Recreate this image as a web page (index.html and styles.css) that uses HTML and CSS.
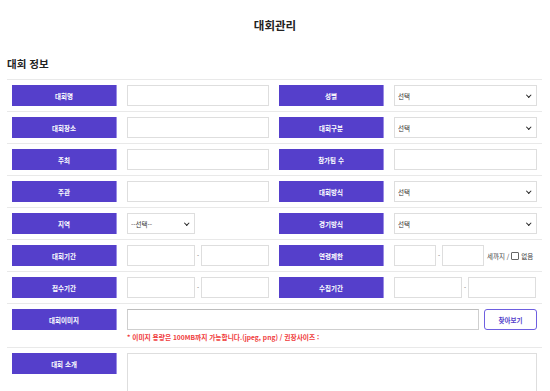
FILE: index.html
```html
<!DOCTYPE html>
<html lang="ko">
<head>
    <meta charset="UTF-8">
    <meta name="viewport" content="width=device-width, initial-scale=1.0">
    <title>대회관리</title>
    <link rel="stylesheet" href="styles.css">
</head>
<body>
    <h1 class="page-title">대회관리</h1>
    <div class="section">
        <h2 class="section-title">대회 정보</h2>
        <div class="form">
            <div class="row">
                <div class="label">대회명</div>
                <div class="cell"><input type="text" class="input full"></div>
                <div class="label">성별</div>
                <div class="cell">
                    <span class="select-wrap full"><select class="select"><option>선택</option></select></span>
                </div>
            </div>
            <div class="row">
                <div class="label">대회장소</div>
                <div class="cell"><input type="text" class="input full"></div>
                <div class="label">대회구분</div>
                <div class="cell">
                    <span class="select-wrap full"><select class="select"><option>선택</option></select></span>
                </div>
            </div>
            <div class="row">
                <div class="label">주최</div>
                <div class="cell"><input type="text" class="input full"></div>
                <div class="label">참가팀 수</div>
                <div class="cell"><input type="text" class="input full"></div>
            </div>
            <div class="row">
                <div class="label">주관</div>
                <div class="cell"><input type="text" class="input full"></div>
                <div class="label">대회방식</div>
                <div class="cell">
                    <span class="select-wrap full"><select class="select"><option>선택</option></select></span>
                </div>
            </div>
            <div class="row">
                <div class="label">지역</div>
                <div class="cell">
                    <span class="select-wrap half"><select class="select"><option>--선택--</option></select></span>
                </div>
                <div class="label">경기방식</div>
                <div class="cell">
                    <span class="select-wrap full"><select class="select"><option>선택</option></select></span>
                </div>
            </div>
            <div class="row">
                <div class="label">대회기간</div>
                <div class="cell">
                    <input type="text" class="input half"><span class="dash">-</span><input type="text" class="input half">
                </div>
                <div class="label">연령제한</div>
                <div class="cell">
                    <input type="text" class="input age"><span class="dash">-</span><input type="text" class="input age">
                    <span class="age-note">세까지 / <span class="check"></span> 없음</span>
                </div>
            </div>
            <div class="row">
                <div class="label">접수기간</div>
                <div class="cell">
                    <input type="text" class="input half"><span class="dash">-</span><input type="text" class="input half">
                </div>
                <div class="label">수집기간</div>
                <div class="cell">
                    <input type="text" class="input half"><span class="dash">-</span><input type="text" class="input half">
                </div>
            </div>
            <div class="row">
                <div class="label">대회이미지</div>
                <div class="cell wide">
                    <div class="file-line">
                        <input type="text" class="input file-input">
                        <button class="btn-find">찾아보기</button>
                    </div>
                    <p class="note">* 이미지 용량은 100MB까지 가능합니다.(jpeg, png) / 권장사이즈 :</p>
                </div>
            </div>
            <div class="row">
                <div class="label">대회 소개</div>
                <div class="cell wide">
                    <textarea class="textarea"></textarea>
                </div>
            </div>
        </div>
    </div>
</body>
</html>
```

FILE: styles.css
```css
body {
    margin: 0;
    font-family: "Noto Sans CJK KR", "Noto Sans", sans-serif;
    background-color: #fff;
    color: #222;
}
.page-title {
    margin: 17px 0 0;
    font-size: 11.5px;
    line-height: 16px;
    text-align: center;
    font-weight: bold;
}
.section {
    padding: 0 8px 0 7px;
}
.section-title {
    margin: 24px 0 8px;
    font-size: 10.5px;
    line-height: 14px;
    font-weight: bold;
}
.row {
    display: grid;
    grid-template-columns: 105px 142px 105px 143px;
    column-gap: 10px;
    padding: 5px 0 5px 5px;
    border-top: 1px solid #e9e9e9;
    align-items: start;
}
.label {
    height: 21px;
    background-color: #553fcb;
    border-right: 1px solid #9a8ce6;
    box-sizing: border-box;
    color: #fff;
    font-size: 6.5px;
    font-weight: bold;
    display: flex;
    align-items: center;
    justify-content: center;
}
.cell {
    display: flex;
    align-items: center;
    height: 21px;
}
.cell.wide {
    grid-column: span 3;
    height: auto;
    flex-direction: column;
    align-items: stretch;
}
.input, .select {
    height: 21px;
    box-sizing: border-box;
    border: 1px solid #dedede;
    border-radius: 0;
    background-color: #fff;
    font-family: inherit;
    font-size: 6.5px;
    color: #333;
    padding: 0 3px;
    margin: 0;
    outline: none;
}
.select-wrap {
    position: relative;
    display: block;
}
.select {
    appearance: none;
    -webkit-appearance: none;
    width: 100%;
    display: block;
}
.select-wrap::after {
    content: "";
    position: absolute;
    right: 7px;
    top: 8px;
    width: 2.5px;
    height: 2.5px;
    border-right: 1.3px solid #222;
    border-bottom: 1.3px solid #222;
    transform: rotate(45deg);
    pointer-events: none;
}
.full {
    width: 100%;
}
.half {
    width: 68px;
}
.age {
    width: 42px;
}
.dash {
    width: 6px;
    text-align: center;
    font-size: 6px;
    color: #555;
}
.age-note {
    margin-left: 3px;
    font-size: 6.5px;
    color: #444;
    white-space: nowrap;
    display: flex;
    align-items: center;
    gap: 2px;
}
.check {
    display: inline-block;
    width: 6px;
    height: 6px;
    border: 1px solid #666;
    border-radius: 1px;
}
.file-line {
    display: flex;
    gap: 5px;
}
.file-input {
    flex: 1;
    border-color: #cfcfcf;
    border-top-color: #bdbdbd;
}
.btn-find {
    width: 53px;
    height: 21px;
    box-sizing: border-box;
    border: 1px solid #6e5fe0;
    border-radius: 3px;
    background: #fff;
    color: #553fcb;
    font-family: inherit;
    font-size: 6.5px;
    font-weight: bold;
    padding: 0;
}
.note {
    margin: 3px 0 0;
    font-size: 6.7px;
    line-height: 9px;
    color: #f03c3c;
    font-weight: bold;
}
.textarea {
    width: 100%;
    height: 60px;
    box-sizing: border-box;
    border: 1px solid #dedede;
    resize: none;
    margin: 0;
    display: block;
}
```
